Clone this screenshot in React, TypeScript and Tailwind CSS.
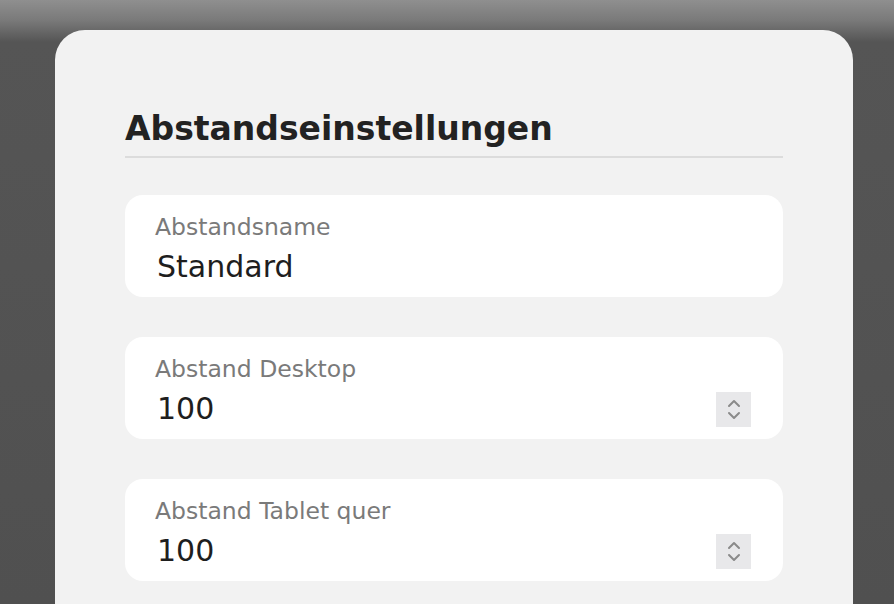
import React from 'react';

function Spinner() {
  return (
    <div className="w-[35px] h-[35px] bg-[#e8e8ea] flex flex-col items-center justify-center gap-[3px]">
      <svg width="16" height="10" viewBox="0 0 16 10" fill="none" stroke="#8a8a8a" strokeWidth="2" strokeLinecap="round" strokeLinejoin="round">
        <path d="M3 8 L8 3 L13 8" />
      </svg>
      <svg width="16" height="10" viewBox="0 0 16 10" fill="none" stroke="#8a8a8a" strokeWidth="2" strokeLinecap="round" strokeLinejoin="round">
        <path d="M3 2 L8 7 L13 2" />
      </svg>
    </div>
  );
}

function Field({ label, value, numeric }: { label: string; value: string; numeric?: boolean }) {
  return (
    <div className="bg-white rounded-[18px] h-[102px] pl-[30px] pr-[32px] pt-[17px] flex flex-col">
      <span className="text-[23.5px] leading-[30px] text-[#7a7a7a]">{label}</span>
      <div className="flex items-center justify-between mt-[6px]">
        <span className="text-[30px] leading-[38px] text-[#1e1e1e] pl-[2px]">{value}</span>
        {numeric && <Spinner />}
      </div>
    </div>
  );
}

export default function App() {
  return (
    <div
      className="w-full h-[604px] overflow-hidden bg-[linear-gradient(to_bottom,#8f8f8f_0px,#7a7a7a_20px,#555555_42px,#505050_100%)]"
      style={{ fontFamily: '"DejaVu Sans", "Noto Sans", sans-serif' }}
    >
      <div className="ml-[55px] mt-[30px] w-[798px] h-[620px] bg-[#f2f2f2] rounded-[30px] px-[70px] pt-[79px]">
        <h1 className="text-[33px] leading-[40px] font-semibold text-[#222222] pb-[7px] border-b-2 border-[#dcdcdc]">
          Abstandseinstellungen
        </h1>
        <div className="flex flex-col gap-[40px] mt-[37px]">
          <Field label="Abstandsname" value="Standard" />
          <Field label="Abstand Desktop" value="100" numeric />
          <Field label="Abstand Tablet quer" value="100" numeric />
        </div>
      </div>
    </div>
  );
}
